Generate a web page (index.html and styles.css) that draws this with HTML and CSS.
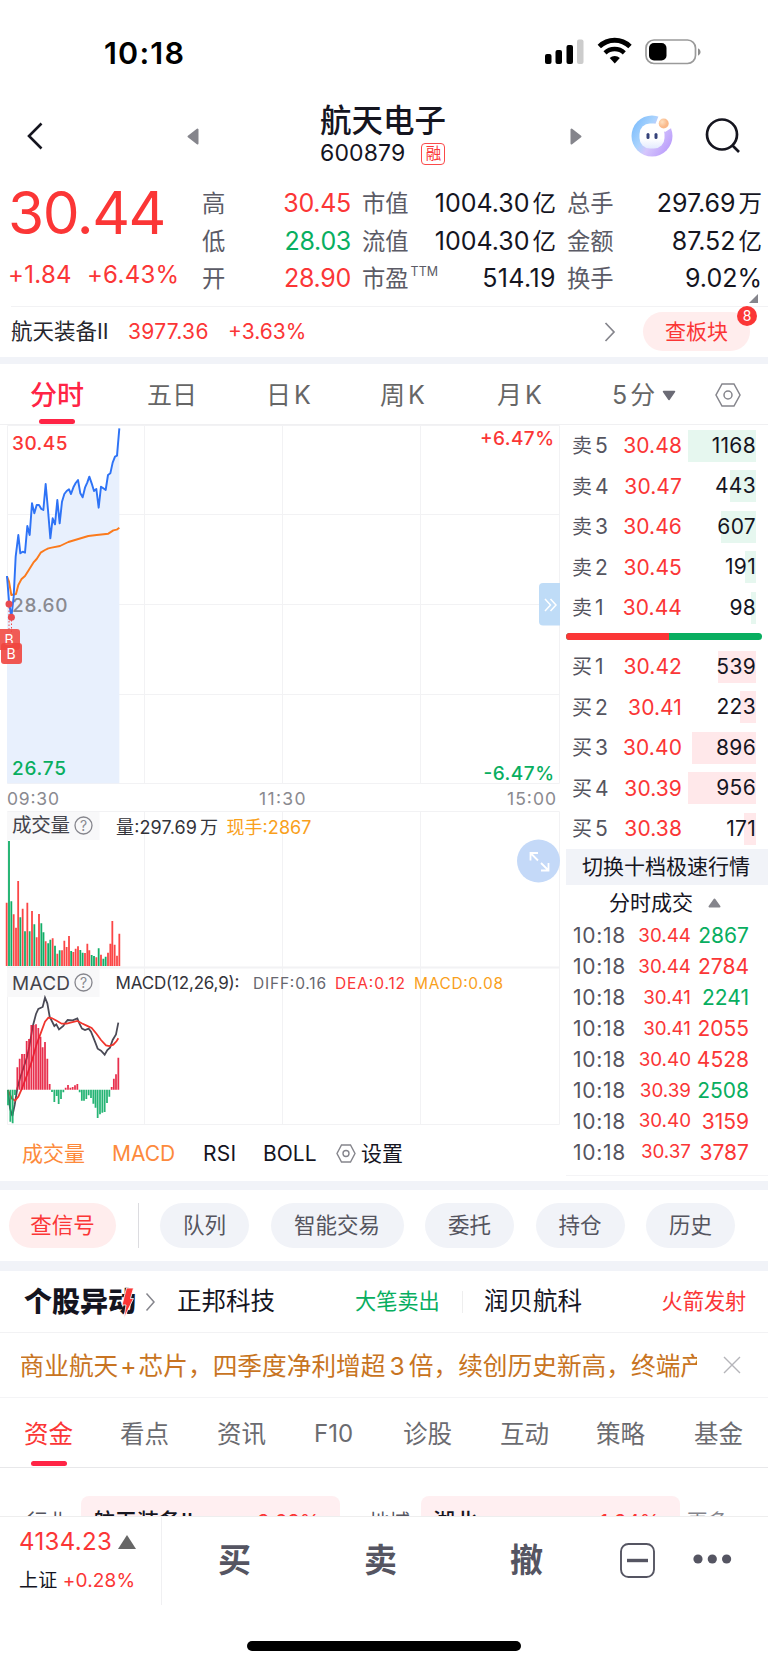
FILE: index.html
```html
<!DOCTYPE html>
<html lang="zh-CN">
<head>
<meta charset="utf-8">
<title>航天电子 600879</title>
<link rel="stylesheet" href="styles.css">
</head>
<body>
<div class="status">
  <span class="clock">10:18</span>
  <svg class="status-icons" width="160" height="30" viewBox="544 37 160 30">
    <rect x="545" y="54" width="6.5" height="10" rx="2"/><rect x="555.5" y="50" width="6.5" height="14" rx="2"/><rect x="566.5" y="45" width="6.5" height="19" rx="2"/><rect x="577" y="39.500" width="6.500" height="24.500" rx="2" fill="#ccc"/>
    <path d="M599.300 46.500A22 22 0 0 1 630 46.500" fill="none" stroke="#000" stroke-width="4.800"/>
    <path d="M605 52.800A14 14 0 0 1 624.300 52.800" fill="none" stroke="#000" stroke-width="4.400"/>
    <path d="M609.700 58A7.500 7.500 0 0 1 619.800 58L614.800 63.500Z"/>
    <rect x="646" y="40" width="49.500" height="23.500" rx="8" fill="none" stroke="#9a9a9a" stroke-width="1.700"/>
    <rect x="649" y="43" width="17.500" height="17.500" rx="5"/>
    <path d="M698 48.200Q700.600 49.500 700.600 52T698 55.800Z" fill="#8c8c8c"/>
  </svg>
</div>
<header class="header">
  <svg class="ico back" width="18" height="28" viewBox="0 0 18 28"><path d="M15.500 1.500 3 14l12.500 12.500" fill="none" stroke="#15151f" stroke-width="2.600"/></svg>
  <svg class="ico prev" width="12" height="17" viewBox="0 0 12 17"><path d="M10.500 1.500v14L1.500 8.500Z" fill="#85858c" stroke="#85858c" stroke-width="2" stroke-linejoin="round"/></svg>
  <div class="title"><b>航天电子</b><div class="code"><span>600879</span><i>融</i></div></div>
  <svg class="ico next" width="12" height="17" viewBox="0 0 12 17"><path d="M1.500 1.500v14l9-7Z" fill="#85858c" stroke="#85858c" stroke-width="2" stroke-linejoin="round"/></svg>
  <svg class="ico bot" width="42" height="42" viewBox="0 0 42 42">
    <defs><linearGradient id="g" x1="0" y1=".2" x2="1" y2=".8"><stop offset="0" stop-color="#7cbcfc"/><stop offset=".35" stop-color="#a9d3fd"/><stop offset=".55" stop-color="#d5c6fc"/><stop offset="1" stop-color="#b899fb"/></linearGradient>
    <linearGradient id="f" x1="0" y1="0" x2="0" y2="1"><stop offset=".6" stop-color="#fff"/><stop offset="1" stop-color="#e3eafe"/></linearGradient>
    <radialGradient id="o" cx=".35" cy=".35"><stop offset="0" stop-color="#fee0c0"/><stop offset="1" stop-color="#fab98a"/></radialGradient></defs>
    <circle cx="21" cy="21" r="20.500" fill="url(#g)"/>
    <path d="M28 0H42V12L34 17 24 10Z" fill="#fff"/>
    <rect x="8.500" y="8.500" width="25" height="25" rx="10.500" fill="url(#f)"/>
    <circle cx="32.700" cy="8.500" r="5" fill="url(#o)"/>
    <rect x="15.500" y="18" width="3" height="6" rx="1.500" fill="#35427a"/><rect x="23.500" y="18" width="3" height="6" rx="1.500" fill="#35427a"/>
  </svg>
  <svg class="ico search" width="36" height="36" viewBox="0 0 36 36"><circle cx="17" cy="16.500" r="15" fill="none" stroke="#15151f" stroke-width="2.700"/><path d="m27 27 7 7" stroke="#15151f" stroke-width="2.700"/></svg>
</header>
<section class="quote">
  <div class="price"><strong>30.44</strong><div class="change"><span>+1.84</span><span>+6.43%</span></div></div>
  <div class="stats">
    <span>高</span><b class="r">30.45</b><span class="k2">市值</span><b>1004.30<em>亿</em></b><span class="k3">总手</span><b>297.69<em>万</em></b>
    <span>低</span><b class="g">28.03</b><span class="k2">流值</span><b>1004.30<em>亿</em></b><span class="k3">金额</span><b>87.52<em>亿</em></b>
    <span>开</span><b class="r">28.90</b><span class="k2">市盈<sup>TTM</sup></span><b class="wide">514.19</b><span class="k3">换手</span><b>9.02%</b>
  </div>
  <i class="corner"></i>
</section>
<section class="sector">
  <span class="sname">航天装备<em>Ⅱ</em></span><span class="r sval">3977.36</span><span class="r spct">+3.63%</span>
  <svg width="12" height="20" viewBox="0 0 12 20"><path d="m1.500 1 8.500 9-8.500 9" fill="none" stroke="#85858c" stroke-width="1.700"/></svg>
  <div class="lookup">查板块<i>8</i></div>
</section>
<nav class="periods">
  <span class="on">分时</span><span>五日</span><span>日<em>K</em></span><span>周<em>K</em></span><span>月<em>K</em></span><span class="five"><em>5</em>分<svg width="14" height="11" viewBox="0 0 14 11"><path d="M1.500 1.500h11L7 9.500Z" fill="#6b6b75" stroke="#6b6b75" stroke-width="1.500" stroke-linejoin="round"/></svg></span>
  <svg width="26" height="24" viewBox="0 0 26 24"><path d="M7 1h12l6 11-6 11H7L1 12Z" fill="none" stroke="#85858c" stroke-width="1.500"/><circle cx="13" cy="12" r="4" fill="none" stroke="#85858c" stroke-width="1.500"/></svg>
</nav>
<main class="board">
  <div class="charts">
    <svg class="plot" width="562" height="703" viewBox="0 425 562 703">
      <g class="grid"><path d="M7.500 425.500H559.500V783.500H7.500ZM7.500 514.500H559.500M7.500 604.500H559.500M7.500 694.500H559.500M144.500 425V783M282.500 425V783M420.500 425V783M7.500 811.500H559.500V1124.500H7.500ZM144.500 812V1124M282.500 812V1124M420.500 812V1124"/><path d="M7 967.500H559" stroke-width="2"/></g>
      <rect x="7" y="812" width="92.500" height="28" fill="#f8f8f9"/><rect x="7" y="968" width="92.500" height="29" fill="#f8f8f9"/>
      <g transform="translate(0 410) scale(.33333)">
        <path fill="#e8f0fd" d="M21 1120V498L27 575 34 622 41 560 47 440 55 375 61 430 68 425 75 428 82 348 89 375 96 280 103 310 110 285 117 285 124 297 130 300 137 222 144 300 151 385 158 325 165 343 172 270 179 340 186 275 193 252 200 243 207 238 213 252 221 230 227 219 234 210 241 250 248 262 255 233 262 217 268 200 275 220 282 243 289 237 296 293 303 230 310 235 317 240 324 195 331 190 338 158 345 140 351 137 358 55V1120Z"/>
      </g>
      <g class="grey"><text x="12" y="612" textLength="55.500" class="t19 medium">28.60</text></g>
      <g transform="translate(0 410) scale(.33333)" fill="none" stroke-width="5.800" stroke-linejoin="round">
        <path stroke="#fb7a1c" d="M21 500 27 515 34 555 48 552 55 525 64 508 75 498 85 482 100 458 110 447 122 428 135 420 145 415 155 413 180 408 205 396 235 387 265 378 290 375 325 371 340 361 350 359 358 353"/>
        <path stroke="#2e73f6" d="M21 498 27 575 34 622 41 560 47 440 55 375 61 430 68 425 75 428 82 348 89 375 96 280 103 310 110 285 117 285 124 297 130 300 137 222 144 300 151 385 158 325 165 343 172 270 179 340 186 275 193 252 200 243 207 238 213 252 221 230 227 219 234 210 241 250 248 262 255 233 262 217 268 200 275 220 282 243 289 237 296 293 303 230 310 235 317 240 324 195 331 190 338 158 345 140 351 137 358 55"/>
      </g>
      <path d="M9 607V630M11.500 620V634" stroke="#f04848" stroke-dasharray="1.500 2"/>
      <circle cx="9" cy="604" r="3.500" fill="#e84a50"/><circle cx="11.400" cy="617.300" r="3.500" fill="#e84a50"/>
      <rect x="-3" y="629" width="23" height="21" rx="3" fill="#f0453f" opacity=".88"/><text x="4.500" y="645" font-size="14" fill="#fff">B</text>
      <rect x="1" y="643" width="21" height="21" rx="3" fill="#f0453f" opacity=".9"/><text x="6.500" y="659" font-size="14" fill="#fff">B</text>
      <g class="t19 medium"><text x="12" y="449.500" textLength="55.500" fill="#fb3636">30.45</text><text x="12" y="775" textLength="54" fill="#08ae60">26.75</text><text x="480" y="444.500" textLength="74" fill="#fb3636">+6.47%</text><text x="483.500" y="780" textLength="70.500" fill="#08ae60">-6.47%</text></g>
      <g class="t17 grey"><text x="7" y="804.500" textLength="52">09:30</text><text x="259" y="804.500" textLength="46.500">11:30</text><text x="507" y="804.500" textLength="49">15:00</text></g>
      <g fill="#44444c"><text x="12" y="832" textLength="58" font-size="19.500">成交量</text><text x="12" y="989.500" textLength="58" font-size="19">MACD</text></g>
      <g fill="none" stroke="#85858c" stroke-width="1.300"><circle cx="83.500" cy="825.500" r="8.500"/><circle cx="83.500" cy="982.500" r="8.500"/></g>
      <g class="grey" font-size="14" text-anchor="middle"><text x="83.500" y="830.500">?</text><text x="83.500" y="987.500">?</text></g>
      <g font-size="18" fill="#33333a"><text x="116" y="833.500" textLength="81">量:297.69</text><text x="200" y="833.500">万</text><text x="226.500" y="833.500" textLength="85" fill="#f9a01b">现手:2867</text></g>
      <g font-size="17"><text x="115.500" y="989" textLength="124" fill="#33333a">MACD(12,26,9):</text><g font-size="15.500"><text x="253" y="989" textLength="73" fill="#66666f">DIFF:0.16</text><text x="335" y="989" textLength="70" fill="#fb3636">DEA:0.12</text><text x="414" y="989" textLength="89" fill="#f9a01b">MACD:0.08</text></g></g>
      <g transform="translate(0 780) scale(.33333)" fill="none" stroke-width="5.400">
        <path stroke="#fb4646" d="M20 558V368M41 558V403M48 558V443M54.500 558V303M68 558V386M82 558V368M96 558V393M110 558V472M117 558V402M137 558V484M158 558V475M172 558V521M186 558V511M193 558V482M200 558V501M207 558V468M220 558V516M227 558V506M234 558V499M255 558V519M262 558V491M268 558V511M289 558V532M303 558V524M324 558V518M331 558V491M337 558V423M344 558V494M351 558V527M358 558V461"/>
        <path stroke="#12ae68" d="M27 558V183M34 558V364M61 558V412M75 558V454M89 558V454M103 558V433M124 558V430M130.500 558V457M144.500 558V490M151 558V479M165 558V497M179 558V511M213.500 558V513M241 558V510M248 558V518M275 558V525M282 558V528M296 558V505M310 558V536M317 558V530"/>
        <g stroke-width="5.300">
        <path stroke="#4a4a56" d="M24 930 30 985 37 1008 44 975 52 925 60 895 70 865 80 835 88 800 98 740 108 702 115 687 128 681 135 653 142 670 149 710 163 738 169 733 177 748 190 738 197 727 203 720 218 721 232 715 238 730 246 746 255 750 266 746 273 755 285 785 293 806 303 812 314 824 322 810 330 803 338 780 348 763 355 728"/>
        <path stroke="#f0352d" d="M24 930 35 955 45 962 55 950 66 925 80 888 95 845 110 792 122 760 135 725 145 713 155 714 170 722 185 731 200 731 232 723 245 730 260 737 275 744 290 762 303 780 318 796 328 798 340 794 350 783 355 775"/>
        <path stroke="#12ae68" opacity=".92" d="M24 929V976M31 929V1025M38 929V1030M45 929V945M156 929V936M163 929V966M170 929V948M176 929V972M183 929V957M190 929V937M239 929V937M245.500 929V962M252 929V962M259 929V957M266 929V946M273 929V954M280 929V971M286.500 929V983M293 929V1014M300 929V1003M307 929V998M314 929V996M321 929V969M328 929V950"/>
        <path stroke="#e5183a" opacity=".9" d="M52 929V862M59 929V836M66 929V822M73 929V822M80 929V783M87 929V777M94 929V735M101 929V735M108 929V733M115 929V744M121.500 929V770M128 929V802M135 929V786M142 929V836M149 929V912M197 929V923M204 929V915M211 929V923M218 929V921M225 929V916M232 929V912M335 929V921M341.500 929V896M348 929V883M355 929V833"/>
        </g>
      </g>
      <path d="M560 583H543Q539 583 539 587V621.500Q539 625.500 543 625.500H560Z" fill="#bfdcf7"/><path d="m545 599 5.500 6-5.500 6m5.500-12 5.500 6-5.500 6" fill="none" stroke="#fff" stroke-width="1.500"/>
      <circle cx="538.500" cy="861" r="21.500" fill="#c4d9f8"/><path d="M538 853H530.500V860.500M530.500 853 538 860.500M541 870.500H548.500V863M548.500 870.500 541 863" fill="none" stroke="#fff" stroke-width="1.800"/>
    </svg>
    <div class="indicators"><span class="o i1">成交量</span><span class="o i2">MACD</span><span class="i3">RSI</span><span class="i4">BOLL</span><svg width="20" height="19" viewBox="0 0 20 19"><path d="M5.500 1h9l4.500 8.500-4.500 8.500h-9L1 9.500Z" fill="none" stroke="#85858c" stroke-width="1.400"/><circle cx="10" cy="9.500" r="3" fill="none" stroke="#85858c" stroke-width="1.400"/></svg><span>设置</span></div>
  </div>
  <aside class="book">
    <div class="lvl s"><span>卖<em>5</em></span><b>30.48</b><u style="--w:68px">1168</u></div>
    <div class="lvl s"><span>卖<em>4</em></span><b>30.47</b><u style="--w:26px">443</u></div>
    <div class="lvl s"><span>卖<em>3</em></span><b>30.46</b><u style="--w:35px">607</u></div>
    <div class="lvl s"><span>卖<em>2</em></span><b>30.45</b><u style="--w:11px">191</u></div>
    <div class="lvl s"><span>卖<em>1</em></span><b>30.44</b><u style="--w:5px">98</u></div>
    <div class="ratio"><i></i></div>
    <div class="lvl"><span>买<em>1</em></span><b>30.42</b><u style="--w:38px">539</u></div>
    <div class="lvl"><span>买<em>2</em></span><b>30.41</b><u style="--w:16px">223</u></div>
    <div class="lvl"><span>买<em>3</em></span><b>30.40</b><u style="--w:64px">896</u></div>
    <div class="lvl"><span>买<em>4</em></span><b>30.39</b><u style="--w:68px">956</u></div>
    <div class="lvl"><span>买<em>5</em></span><b>30.38</b><u style="--w:12px">171</u></div>
    <div class="switch">切换十档极速行情</div>
    <div class="ticks-head">分时成交<svg width="13" height="10" viewBox="0 0 13 10"><path d="M1.500 8.500h10l-5-7Z" fill="#85858c" stroke="#85858c" stroke-width="2" stroke-linejoin="round"/></svg></div>
    <div class="tick"><span>10:18</span><b>30.44</b><u class="g">2867</u></div>
    <div class="tick"><span>10:18</span><b>30.44</b><u>2784</u></div>
    <div class="tick"><span>10:18</span><b>30.41</b><u class="g">2241</u></div>
    <div class="tick"><span>10:18</span><b>30.41</b><u>2055</u></div>
    <div class="tick"><span>10:18</span><b>30.40</b><u>4528</u></div>
    <div class="tick"><span>10:18</span><b>30.39</b><u class="g">2508</u></div>
    <div class="tick"><span>10:18</span><b>30.40</b><u>3159</u></div>
    <div class="tick"><span>10:18</span><b>30.37</b><u>3787</u></div>
  </aside>
</main>
<section class="pills"><span class="hot">查信号</span><i></i><span>队列</span><span>智能交易</span><span>委托</span><span>持仓</span><span>历史</span></section>
<section class="moves">
  <b class="brand">个股异动<svg width="14" height="32" viewBox="0 0 14 32"><path d="M5.500 1h7L9.500 11.500H12.500L3 31 5 18H1Z" fill="#fb3636" stroke="#fff" stroke-width=".8"/></svg></b>
  <svg class="chev" width="11" height="20" viewBox="0 0 11 20"><path d="m1.500 1.500 7.500 8.500-7.500 8.500" fill="none" stroke="#85858c" stroke-width="1.500"/></svg>
  <span class="n1">正邦科技</span><span class="m1">大笔卖出</span><i></i><span class="n2">润贝航科</span><span class="m2">火箭发射</span>
</section>
<section class="notice"><div><p>商业航天<em>+</em>芯片，四季度净利增超<em class="n">3</em>倍，续创历史新高，终端产品</p></div><svg width="18" height="18" viewBox="0 0 18 18"><path d="m1 1 16 16M17 1 1 17" stroke="#b5b5ba" stroke-width="1.400"/></svg></section>
<nav class="tabs"><span class="on">资金</span><span>看点</span><span>资讯</span><span class="f10">F10</span><span>诊股</span><span>互动</span><span>策略</span><span>基金</span></nav>
<section class="peek"><span class="c1">行业</span><div><b>航天装备Ⅱ</b><em>3.63%</em></div><span class="c2">地域</span><div><b>湖北</b><em>1.94%</em></div><span class="c3">更多›</span></section>
<footer class="dock">
  <div class="index"><div class="idx">4134.23<i></i></div><div class="sh">上证 <em>+0.28%</em></div></div>
  <span>买</span><span>卖</span><span>撤</span>
  <svg class="box" width="35" height="35" viewBox="0 0 35 35"><rect x="1" y="1" width="33" height="33" rx="7.500" fill="none" stroke="#555562" stroke-width="1.900"/><path d="M7 17.500h21" stroke="#555562" stroke-width="3.400"/></svg>
  <svg class="dots" width="39" height="10" viewBox="0 0 39 10"><g fill="#555562"><circle cx="5" cy="5" r="4.600"/><circle cx="19.300" cy="5" r="4.600"/><circle cx="33.600" cy="5" r="4.600"/></g></svg>
</footer>
<div class="home"><i></i></div>
</body>
</html>
```
FILE: styles.css
```css
*{box-sizing:border-box}
body{margin:0;width:768px;height:1665px;overflow:hidden;background:#fff;color:#15151f;font-family:Inter,"Noto Sans CJK SC",sans-serif;font-size:22px;line-height:1}
b,strong,em,i,u{font-weight:400;font-style:normal;text-decoration:none}
svg{display:block;flex:none}
span,b{white-space:nowrap}
.r{color:#fb3636}.g{color:#08ae60}.grey{fill:#8a8a90}
.status{height:100px;display:flex;justify-content:space-between;padding:37px 64px 0 104px}
.clock{font-size:30.5px;font-weight:600;line-height:31px;letter-spacing:1.2px;color:#000}
.header{height:80px;display:grid;grid-template-columns:187px 133px 250px 60px 75px 1fr;align-items:center;padding-bottom:8px}
.back{margin-left:26px}
.bot{margin-left:1px}
.title b{display:block;font-size:31.5px;line-height:36px;font-weight:500}
.title{padding-bottom:3px}
.code{display:flex;align-items:center;gap:16px;height:25px;font-size:23px;margin-top:2px}
.code span{letter-spacing:.15px}
.code i{width:24px;height:22px;border:1.5px solid #fb4a4a;border-radius:4px;color:#fb3636;font-size:15.500px;line-height:19px;text-align:center}
.quote{height:126px;display:flex;position:relative;padding-left:8px}
.price{width:194px;color:#fb3636}
.price strong{display:block;font-size:58.5px;line-height:66px;letter-spacing:-1.4px}
.change{display:flex;gap:15px;font-size:24px;margin-top:15px;letter-spacing:.3px;line-height:27px}
.stats{display:grid;grid-template-columns:24px 125px 64px 141px 57px 1fr;grid-auto-rows:37.500px;align-items:center;padding:5px 6px 0 0;font-size:25px;width:566px;height:118px}
.stats span{color:#5b5b66;font-size:23.3px}
.stats b{text-align:right}
.stats .r,.stats .g{letter-spacing:-.3px}
.stats .wide{letter-spacing:.4px}
.stats em{font-size:23.5px;margin-left:3px}
.stats .k2{padding-left:11px}.stats .k3{padding-left:11px}
.stats sup{font-size:12.500px;vertical-align:11px;line-height:0;margin-left:2px}
.corner{position:absolute;right:10px;bottom:3px;border-left:9px solid transparent;border-bottom:9px solid #85858c}
.sector{height:58px;margin-left:11px;border-top:1px solid #f2f2f4;border-bottom:0;display:flex;align-items:center;padding-bottom:8px;font-size:21px}
.sname{width:117px;font-size:21.5px;color:#26262c}
.sval{width:100px;letter-spacing:.3px}.spct{width:376px}
.lookup{position:relative;margin-left:27px;width:107px;height:39px;border-radius:20px;background:#ffeded;color:#fb3636;font-size:21px;line-height:39px;text-align:center}
.lookup i{position:absolute;right:-7px;top:-6px;width:20px;height:20px;border-radius:50%;background:#fb3636;color:#fff;font-size:14px;line-height:20px}
.periods{height:68px;margin-top:-7px;border-top:7px solid #f1f3f8;border-bottom:1px solid #f0f0f2;display:grid;grid-template-columns:147px 119px 114px 117px 115px 103px 53px;align-items:center;font-size:25px;color:#666;flex:none;padding-top:2px}
.periods em{margin-left:3px}
.periods .five em{margin:0 3px 0 0}
.periods .on{color:#ff2445;font-size:27px;font-weight:500;padding-left:30px;position:relative;height:58px;line-height:59px}
.on::after{content:"";position:absolute;left:39px;bottom:0;width:36px;height:5px;border-radius:3px;background:#ff2445}
.five{display:flex;align-items:center}.five svg{margin-left:7px}
.board{display:flex;height:756px}
.charts{width:566px}
.plot{font-family:Inter,"Noto Sans CJK SC",sans-serif}
.grid{fill:none;stroke:#f2f2f4;stroke-width:1}
.t19{font-size:19px}.t17{font-size:17.500px}.medium{font-weight:500}
.indicators{display:flex;align-items:center;height:50px;font-size:21px}
.o{color:#fd8a3c}.i1{margin-left:22px;width:90px}.i2{width:91px}.i3{width:60px;letter-spacing:.3px}.i4{width:73px}
.indicators svg{margin-right:5px}
.book{width:202px;border-bottom:1px solid #f4f4f6;height:751px}
.lvl{height:40.500px;display:grid;grid-template-columns:42px 68px 74px;align-items:center;padding-left:6px;padding-top:1px;font-size:21px}
.lvl span,.tick span{color:#55555f}
.lvl span{font-size:20px}.lvl em{font-size:21px;margin-left:3px}
.lvl b{color:#fb3636;text-align:right;letter-spacing:.1px}
.lvl u{height:32px;line-height:32px;text-align:right;letter-spacing:.3px;background:linear-gradient(#ffe8ea,#ffe8ea) right/var(--w) 100% no-repeat}
.s u{background-image:linear-gradient(#e6f7ef,#e6f7ef)}
.ratio{display:flex;height:7px;width:196px;margin:5px 0 6.5px;border-radius:4px;overflow:hidden;background:#08ae60}
.ratio i{width:103px;background:#fb3636}
.switch{height:36px;background:#f1f3f8;font-size:21px;line-height:36px;padding-left:16px;white-space:nowrap}
.ticks-head{height:36px;display:flex;align-items:center;padding-left:43px;font-size:21px}
.ticks-head svg{margin-left:15px}
.tick{height:30.900px;display:grid;grid-template-columns:54px 64px 58px;align-items:center;padding-left:7px;font-size:21px}
.tick span{letter-spacing:.7px}
.tick b{font-size:18.800px;color:#fb3636;text-align:right;padding-top:1px}
.tick u{text-align:right;color:#fb3636}.tick .g{color:#08ae60}
.pills{height:90px;border-top:9px solid #f1f3f8;border-bottom:10px solid #f1f3f8;display:flex;align-items:center;padding-left:9px}
.pills span{height:45px;line-height:45px;border-radius:23px;background:#f1f3f8;color:#55555f;font-size:21.500px;width:89px;text-align:center;margin-right:21.500px}
.pills span:nth-child(4){width:133px}
.pills .hot{width:107px;background:#ffeded;color:#fb3636;margin:0}
.pills i{width:1px;height:45px;background:#dcdce0;margin:0 21px 0 22px}
.moves{height:62px;border-bottom:1px solid #f2f2f4;display:flex;align-items:center;padding-left:24px;font-size:24.500px}
.brand{width:121px;font-size:28px;font-weight:900;position:relative}
.brand svg{position:absolute;left:97px;top:-1px}
.chev{margin-right:21px}
.n1{width:178px}.m1,.m2{font-size:21.2px}.m1{color:#08ae60;width:107px}.m2{color:#fb3636}
.moves i{width:1px;height:22px;background:#eee;margin-right:21px}
.n2{width:177.5px}
.notice{height:65px;border-bottom:1px solid #f4f4f6;display:flex;align-items:center;padding-left:21px;gap:26px}
.notice div{width:676px;overflow:hidden}
.notice p{margin:0 0 0 -1.5px;padding-top:1px;font-size:24.700px;line-height:34px;white-space:nowrap;color:#c87422}
.notice em{margin:0 2px}.notice .n{margin:0 4px}
.tabs{height:70px;border-bottom:1.500px solid #e8e8ea;position:relative;display:grid;grid-template-columns:96px 97px 97px 89px 97px 96px 98px auto;align-items:center;padding:3px 0 0 24px;font-size:24.500px;color:#6b6b70}
.f10{font-size:24px}
.tabs .on{color:#fb3636}.tabs .on::after{left:31px;bottom:1px}
.peek{height:48px;overflow:hidden;display:flex;padding-top:28px;font-size:20.500px;line-height:51px;color:#55555f}
.peek div{width:259px;height:60px;background:#ffeff1;border-radius:8px;padding:0 20px 0 12px;display:flex;justify-content:space-between}
.peek b{color:#15151f;font-weight:500;font-size:22px}.peek em{color:#fb3636}
.c1{width:81px;padding-left:27px}.c2{width:81px;padding-left:29px}.c3{padding-left:7px;color:#85858c}
.dock{height:88px;border-top:1px solid #eee;display:flex;align-items:center;background:#fff;position:relative}
.index{width:162px;height:88px;border-right:1px solid #f0f0f2;padding:13px 0 0 19px}
.idx{display:flex;font-size:24px;line-height:24px;color:#fb3636;letter-spacing:.35px;align-items:center}
.idx i{border:9px solid transparent;border-bottom:14px solid #666;border-top:0;margin-left:6px}
.sh{margin-top:15px;font-size:19px;line-height:24px;letter-spacing:.15px}.sh em{color:#fb3636}
.dock span{font-size:33px;font-weight:600;color:#555562;width:146px;padding:0 0 1px 56px}
.dock .box{margin:0 38px 1px 20px}.dots{margin-bottom:3px}
.home{height:61px;padding:37px 0 0 247px}.home i{display:block;width:274px;height:10px;border-radius:5px;background:#000}
```
